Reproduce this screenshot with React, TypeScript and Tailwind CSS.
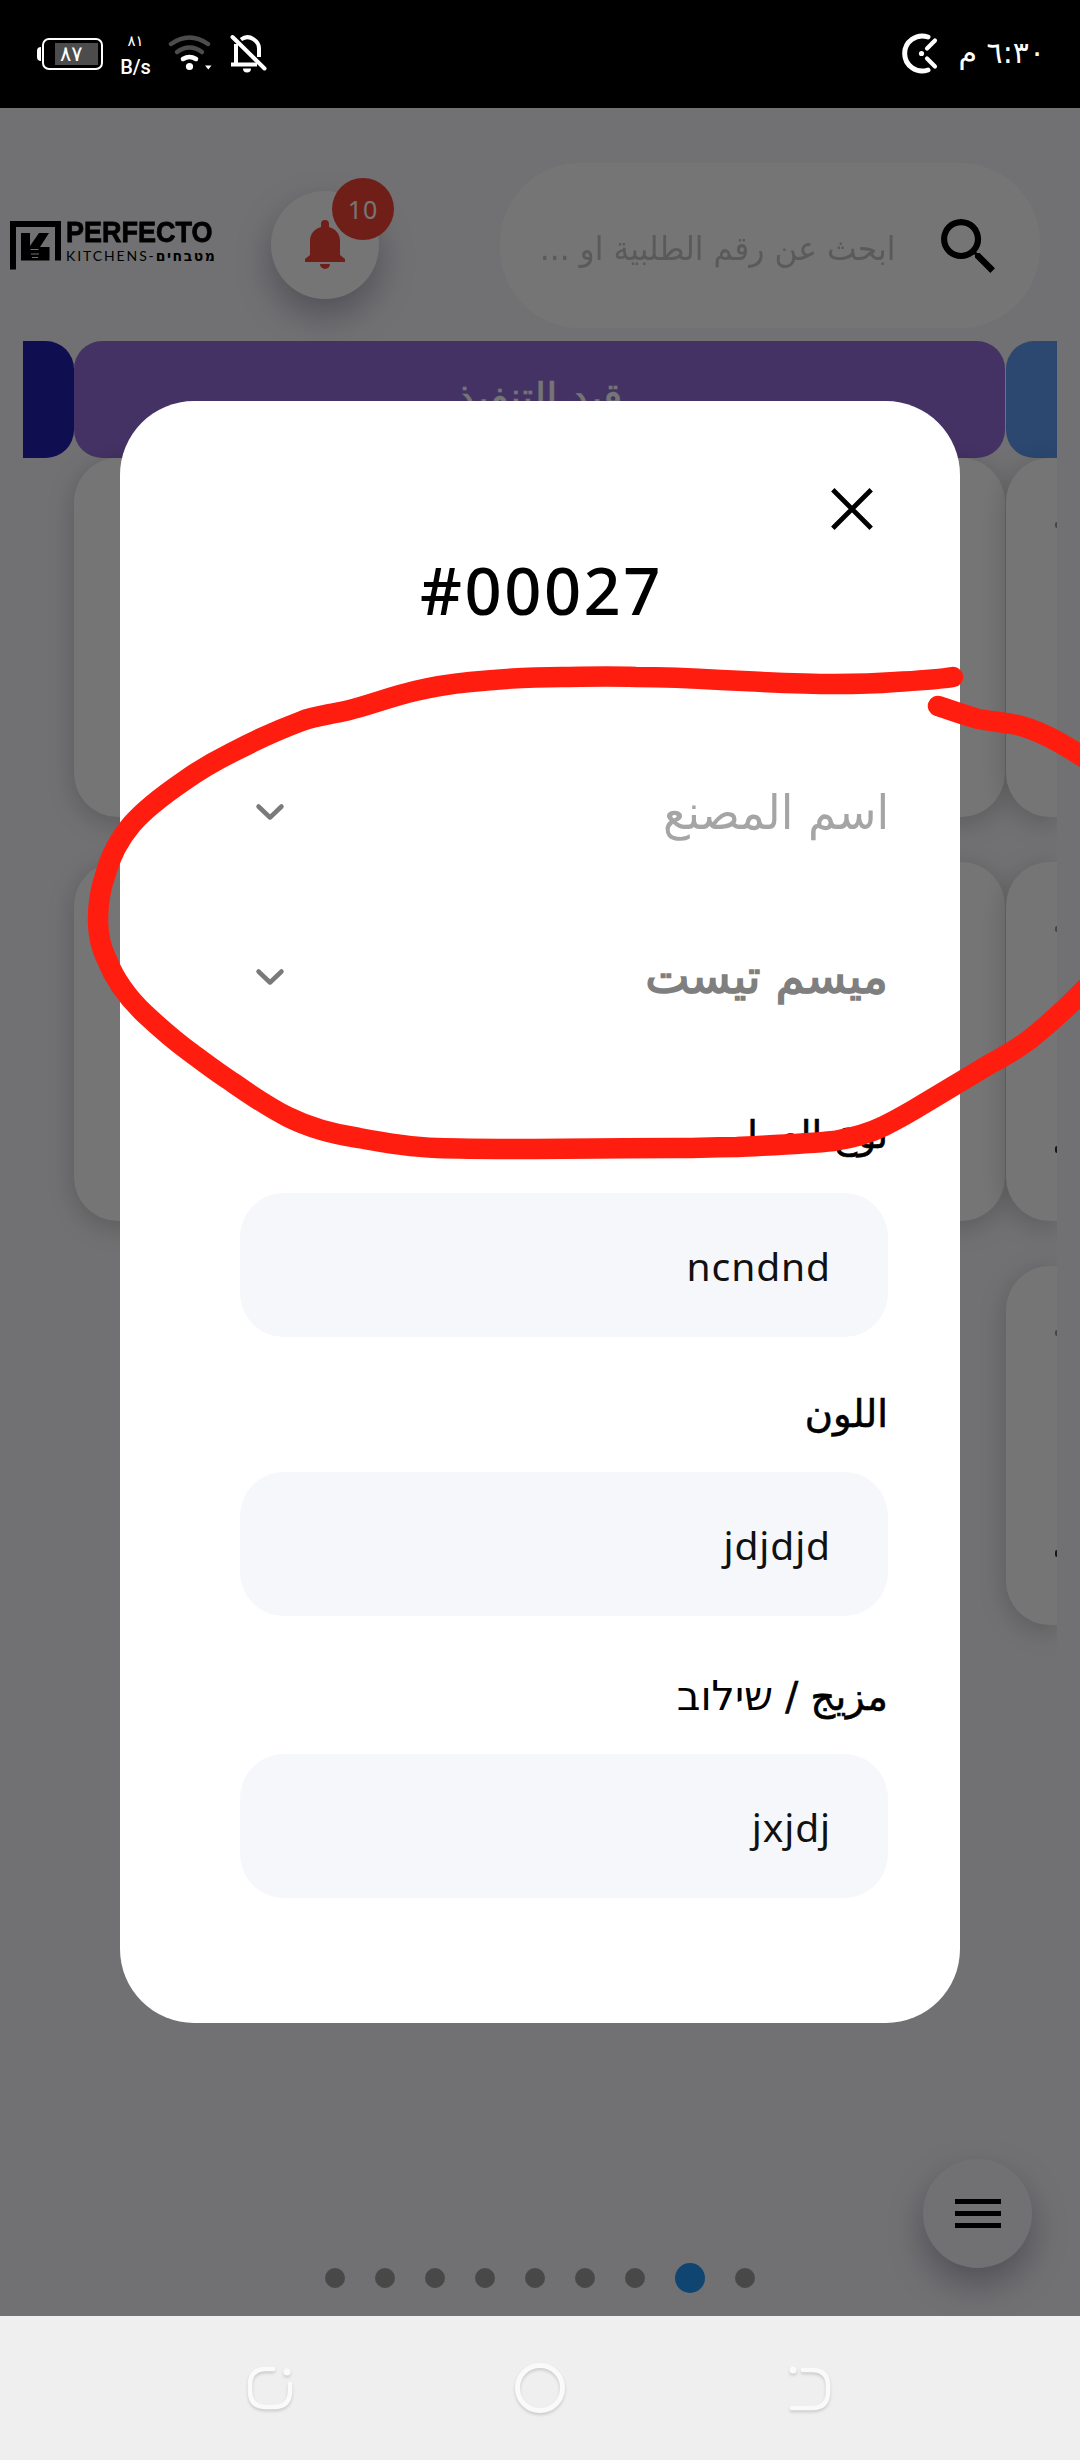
import React from "react";

const ARABIC = "font-['DejaVu_Sans','Noto_Sans',sans-serif]";
const LATIN = "font-['Noto_Sans','Open_Sans',sans-serif]";

function StatusBar() {
  return (
    <div className="flex h-[108px] items-start justify-between bg-black text-white">
      <div className="flex items-start">
        <div className="ml-[37px] mt-[38px] flex h-8 items-center">
          <div className="h-[14px] w-1 rounded-l-sm bg-white" />
          <div className="ml-px flex h-8 w-[61px] items-center justify-end rounded-[7px] border-2 border-white pr-[3px]">
            <div className="flex h-[22px] w-[43px] items-center bg-[#4c4c4c] pl-[5px]">
              <span className={`${ARABIC} text-[21px] leading-[22px]`}>٨٧</span>
            </div>
          </div>
        </div>
        <div className="ml-[17px] mt-[30px] flex w-[31px] flex-col items-center">
          <span className={`${ARABIC} text-[15px] leading-[22px]`}>٨١</span>
          <span className="mt-[4px] font-['Roboto',sans-serif] text-[20px] font-medium leading-[22px]">B/s</span>
        </div>
        <svg className="ml-[16px] mt-[34px]" width="46" height="40" viewBox="167 34 46 40" fill="none">
          <path d="M171 44 Q189.500 31 208 44" stroke="#4c4c4c" strokeWidth="4.500" strokeLinecap="round" />
          <path d="M177 52 Q189.500 43 202 52" stroke="#4c4c4c" strokeWidth="4.500" strokeLinecap="round" />
          <path d="M183 59 Q189.500 55 196 59" stroke="#fff" strokeWidth="4.500" strokeLinecap="round" />
          <circle cx="189.500" cy="66.500" r="3.600" fill="#fff" />
          <path d="M205 65.500h6.500l-3.250 4z" fill="#fff" />
        </svg>
        <svg className="ml-4 mt-[33px]" width="40" height="42" viewBox="229 33 40 42" fill="none">
          <path d="M232.500 37 L264.500 68.500" stroke="#fff" strokeWidth="4" strokeLinecap="round" />
          <path d="M241 39.500 C250 33 259 42 259 48 V57" stroke="#fff" strokeWidth="4" />
          <path d="M236 44 V64.500 M231 64.500 H257" stroke="#fff" strokeWidth="4" />
          <path d="M243 68.500 h8 a4 4 0 0 1 -8 0z" fill="#fff" />
        </svg>
      </div>
      <div className="flex items-start">
        <svg className="mr-[21px] mt-[32px]" width="40" height="42" viewBox="902 32 40 42" fill="none" stroke="#fff" strokeLinecap="round">
          <path d="M928 37 A17.500 17.500 0 1 0 928 70" strokeWidth="5" />
          <path d="M927 48.500 L935 40.500 M927 58.500 L935 66.500" strokeWidth="4.200" />
          <circle cx="921.500" cy="53.500" r="2.600" fill="#fff" stroke="none" />
        </svg>
        <span dir="rtl" className={`${ARABIC} mr-[35px] mt-[33px] block h-10 w-[82px] whitespace-nowrap text-[30px] leading-[40px]`}>
          ٦:٣٠ م
        </span>
      </div>
    </div>
  );
}

function Logo() {
  return (
    <div className="ml-[10px] mt-[113px] flex w-[202px] items-start">
      <svg width="52" height="49" viewBox="0 0 52 49" className="shrink-0">
        <path d="M0 0H51V39.500H45V6H6V48.500H0Z" />
        <path d="M11 12H20V25L29 12H39L30 26H39.500V39.500H11Z" />
        <path d="M20.500 28.500h8M21 33h8M22 36.500h6" stroke="#f6f6fa" strokeWidth="1.200" />
      </svg>
      <div className="ml-[4px] w-[146px]">
        <div className="h-[28px] origin-left scale-x-[0.93] whitespace-nowrap font-['Liberation_Sans',sans-serif] text-[29px] font-bold leading-[22px] [-webkit-text-stroke:0.8px_black]">
          PERFECTO
        </div>
        <div dir="ltr" className="flex h-[14px] items-center justify-between whitespace-nowrap leading-[14px]">
          <span className="font-['Lato',sans-serif] text-[14px] tracking-[1.900px]">KITCHENS-</span>
          <span className="font-['DejaVu_Sans',sans-serif] text-[14px] font-bold tracking-[1.500px]" dir="rtl">
            מטבחים
          </span>
        </div>
      </div>
    </div>
  );
}

function Header() {
  return (
    <div className="flex h-[233px] items-start">
      <Logo />
      <div className="relative ml-[59px] mt-[83px] flex h-[108px] w-[108px] items-center justify-center rounded-full bg-white shadow-[0_16px_34px_rgba(50,40,80,0.35)]">
        <svg width="40" height="50" viewBox="0 0 40 50" fill="#f44336">
          <path d="M16 7V4a4 4 0 0 1 8 0V7C31 9 35 14 35 21V35L40 39V42H0V39L5 35V21C5 14 9 9 16 7ZM15 44H25a5 5 0 0 1-10 0Z" />
        </svg>
        <div className={`${LATIN} absolute -right-[15px] -top-[13px] flex h-[62px] w-[62px] items-center justify-center rounded-full bg-[#f44336] pt-[2px] text-[25px] tracking-[1px] text-white`}>
          10
        </div>
      </div>
      <div className="ml-[121px] mt-[55px] flex h-[165px] w-[540px] items-center justify-end rounded-[80px] bg-white pr-[45px]">
        <div className="flex h-12 w-[353px] items-center justify-end pt-[7px]">
          <span dir="rtl" className={`${ARABIC} block origin-right scale-x-[0.95] whitespace-nowrap text-[33px] leading-[48px] text-[#c4c4c4]`}>
            ابحث عن رقم الطلبية او ...
          </span>
        </div>
        <svg className="ml-[46px]" width="54" height="54" viewBox="3 3 17.500 17.500">
          <path d="M15.500 14h-.790l-.280-.270A6.470 6.470 0 0 0 16 9.500 6.500 6.500 0 1 0 9.500 16c1.610 0 3.090-.590 4.230-1.570l.270.280v.790l5 4.990L20.490 19zm-6 0C7.010 14 5 11.990 5 9.500S7.010 5 9.500 5 14 7.010 14 9.500 11.990 14 9.500 14" />
        </svg>
      </div>
    </div>
  );
}

function Card() {
  return <div className="h-[359px] shrink-0 rounded-[44px] bg-white shadow-[0_6px_28px_rgba(0,0,0,0.2)]" />;
}

function EdgeCard() {
  return (
    <div className="flex h-[359px] shrink-0 flex-col rounded-l-[44px] bg-white pt-[64px] shadow-[0_6px_28px_rgba(0,0,0,0.2)]">
      <div className="ml-auto h-[6px] w-[2px] rounded-l bg-[#999]" />
      <div className="ml-auto mt-[214px] h-[7px] w-[2px] rounded-l bg-[#333]" />
    </div>
  );
}

function Board() {
  return (
    <div className="mx-[23px] flex h-[1440px] overflow-hidden">
      <div className="h-[117px] w-[51px] shrink-0 rounded-r-[28px] bg-[#2020b0]" />
      <div className="w-[931px] shrink-0">
        <div className="flex h-[117px] justify-center rounded-[28px] bg-[#946ed9] pt-[28px]">
          <span dir="rtl" className={`${ARABIC} text-[40px] leading-[56px] text-white [-webkit-text-stroke:0.6px_white]`}>قيد التنفيذ</span>
        </div>
        <div className="flex flex-col gap-[45px]">
          <Card />
          <Card />
        </div>
      </div>
      <div className="ml-px w-[51px] shrink-0">
        <div className="h-[117px] rounded-l-[28px] bg-[#609bf3]" />
        <div className="flex flex-col gap-[45px]">
          <EdgeCard />
          <EdgeCard />
          <EdgeCard />
        </div>
      </div>
    </div>
  );
}

function Pager() {
  return (
    <div className="flex h-[30px] items-center gap-[30px] pl-[325px]">
      {[0, 1, 2, 3, 4, 5, 6, 7, 8].map((i) => (
        <div key={i} className={i === 7 ? "h-[30px] w-[30px] rounded-full bg-[#2196f3]" : "h-5 w-5 rounded-full bg-[#9e9e9e]"} />
      ))}
    </div>
  );
}

function SelectRow({ text, strong }: { text: string; strong?: boolean }) {
  return (
    <div className="flex h-[165px] items-center justify-between">
      <svg className="ml-[14px]" width="32" height="20" viewBox="0 0 32 20" fill="none" stroke="#7a7a7a" strokeWidth="4.500" strokeLinecap="round" strokeLinejoin="round">
        <path d="M4.500 4.500 L16 15.500 L27.500 4.500" />
      </svg>
      <span
        dir="rtl"
        className={
          strong
            ? `${ARABIC} block whitespace-nowrap text-[47px] leading-[80px] text-[#7f7f7f] [-webkit-text-stroke:1.500px_#7f7f7f]`
            : `${ARABIC} -mr-px block origin-right scale-x-[0.95] whitespace-nowrap text-[48px] leading-[80px] text-[#a5a5a5]`
        }
      >
        {text}
      </span>
    </div>
  );
}

function Field({ label, value }: { label: React.ReactNode; value: string }) {
  return (
    <div className="flex flex-col">
      <div dir="rtl" className={`${ARABIC} h-[88px] whitespace-nowrap text-[38.500px] leading-[60px] text-black [-webkit-text-stroke:0.600px_black]`}>
        {label}
      </div>
      <div className={`${LATIN} flex h-[144px] items-center justify-end rounded-[44px] bg-[#f6f7fb] pr-[57px] pt-[2px] text-[39px] tracking-[0.900px] text-[#111]`}>
        {value}
      </div>
    </div>
  );
}

function OrderDialog() {
  return (
    <div className="absolute left-[120px] top-[401px] flex h-[1622px] w-[840px] flex-col rounded-[74px] bg-white pl-[120px] pr-[72px]">
      <div className="flex h-[150px] items-end justify-end pr-[15px]">
        <svg width="42" height="42" viewBox="0 0 42 42" className="mb-[21px]" stroke="#000" strokeWidth="4.800">
          <path d="M1.800 1.800 L40.200 40.200 M40.200 1.800 L1.800 40.200" />
        </svg>
      </div>
      <div className={`${LATIN} -ml-[45px] -mt-px h-[81px] text-center text-[65px] font-medium leading-[80px] tracking-[2.500px] text-black`}>#00027</div>
      <div className="mt-[98px]">
        <SelectRow text="اسم المصنع" />
        <SelectRow text="ميسم تيست" strong />
      </div>
      <div className="mt-[46px] flex flex-col gap-[47px]">
        <Field label="نوع العمل" value="ncndnd" />
        <Field label="اللون" value="jdjdjd" />
        <div className="mt-[3px]">
          <Field
            label={
              <>
                مزيج / <span className="text-[41px] [-webkit-text-stroke:0px]">שילוב</span>
              </>
            }
            value="jxjdj"
          />
        </div>
      </div>
    </div>
  );
}

function MarkerStroke() {
  return (
    <svg className="absolute left-0 top-0" width="1080" height="2460" viewBox="0 0 1080 2460" fill="none" stroke="#ff1d10" strokeWidth="20.500" strokeLinecap="round" strokeLinejoin="round">
      <path d="M953 677 C935 680 911 681 895 682 C870 684 850 684 835 684 C800 684 760 682 721 680 C690 678 660 677 636 677 C605 676 580 677 562 677 C535 677 500 679 470 682 C450 684 432 687 415 691 C385 698 360 709 335 713 C325 715 312 717 302 721 C275 731 252 742 231 753 C213 762 198 771 184 781 C165 794 146 808 132 824 C120 838 110 857 105 876 C100 890 98 905 98 920 C98 935 101 948 107 960 C115 980 128 998 145 1014 C160 1028 175 1041 190 1052 C205 1063 218 1073 232 1082 C252 1096 270 1108 288 1117 C310 1128 332 1134 359 1138 C385 1143 410 1147 437 1148 C470 1149 500 1149 535 1149 C585 1149 630 1148 678 1148 C700 1148 718 1147 737 1147 C775 1145 805 1144 834 1141 C852 1138 868 1134 884 1126 C898 1119 912 1111 925 1103 C948 1089 970 1076 990 1064 C1005 1056 1018 1048 1029 1040 C1048 1025 1068 1007 1090 984" />
      <path d="M938 706 C950 710 964 715 978 719 C990 721 1000 722 1012 724 C1035 728 1060 741 1095 765" />
    </svg>
  );
}

function NavBar() {
  return (
    <div className="flex h-[144px] items-center justify-between bg-[#efefef] px-[240px]">
      <svg width="60" height="60" viewBox="240 2358 60 60" fill="none" stroke="#fafafa" strokeWidth="4.500" strokeLinecap="round" className="drop-shadow-[0_2px_1.500px_rgba(0,0,0,0.15)]">
        <path d="M273 2369 H266 Q250 2369 250 2385 V2391 Q250 2407 266 2407 H274 Q290 2407 290 2391 V2384" />
        <circle cx="287" cy="2372" r="3.500" fill="#fafafa" stroke="none" />
      </svg>
      <svg width="60" height="60" viewBox="510 2358 60 60" fill="none" stroke="#fafafa" strokeWidth="5" className="drop-shadow-[0_2px_1.500px_rgba(0,0,0,0.15)]">
        <circle cx="540" cy="2388" r="22.500" />
      </svg>
      <svg width="60" height="60" viewBox="780 2358 60 60" fill="none" stroke="#fafafa" strokeWidth="4.500" strokeLinecap="round" className="drop-shadow-[0_2px_1.500px_rgba(0,0,0,0.15)]">
        <path d="M803 2370 H812 Q828 2370 828 2386 V2392 Q828 2408 812 2408 H792" />
        <circle cx="793" cy="2370" r="3.500" fill="#fafafa" stroke="none" />
      </svg>
    </div>
  );
}

export default function App() {
  return (
    <div className="relative flex h-[2460px] w-[1080px] flex-col overflow-hidden">
      <StatusBar />
      <div className="relative flex h-[2208px] flex-col bg-[#f6f6fa]">
        <Header />
        <Board />
        <div className="mt-[482px]">
          <Pager />
        </div>
        <div className="absolute bottom-[48px] right-[48px] flex h-[109px] w-[109px] flex-col items-center justify-center gap-[7px] rounded-full bg-[#f6f6fa] shadow-[0_16px_34px_rgba(50,40,80,0.35)]">
          <div className="h-[5px] w-[46px] bg-black" />
          <div className="h-[5px] w-[46px] bg-black" />
          <div className="h-[5px] w-[46px] bg-black" />
        </div>
        <div className="absolute inset-0 bg-black/54" />
      </div>
      <NavBar />
      <OrderDialog />
      <MarkerStroke />
    </div>
  );
}
